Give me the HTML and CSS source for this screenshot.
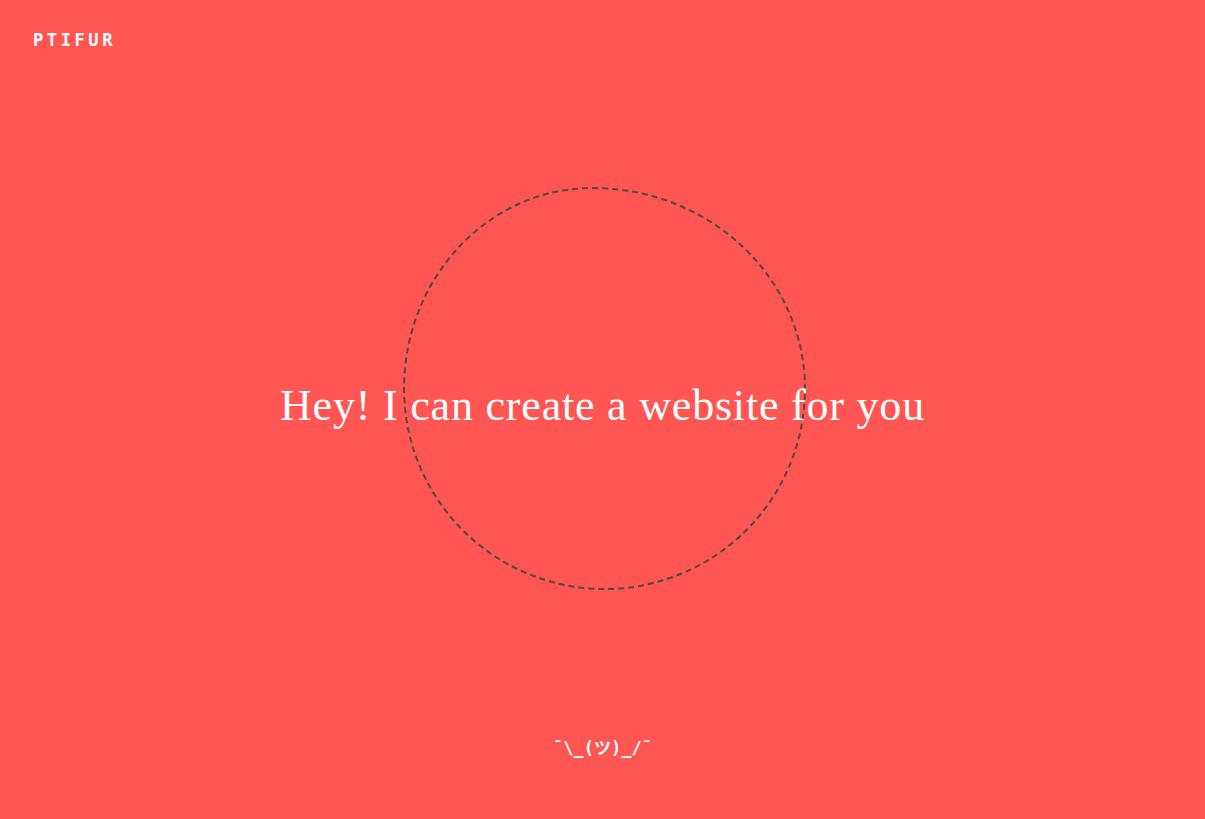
FILE: index.html
```html
<!DOCTYPE html>
<html>
<head>
<meta charset="utf-8">
<link rel="stylesheet" href="styles.css">
</head>
<body>
<div class="page">
  <header class="top">
    <div class="logo">PTIFUR</div>
  </header>
  <main class="hero">
    <div class="blob"></div>
    <h1 class="title">Hey! I can create a website for you</h1>
  </main>
  <footer class="bottom">
    <div class="shrug">¯\_(ツ)_/¯</div>
  </footer>
</div>
</body>
</html>
```
FILE: styles.css
```css
html, body {
  margin: 0;
  padding: 0;
  height: 100%;
}
body {
  background: #ff5553;
  color: #ffffff;
}
.page {
  height: 819px;
  display: flex;
  flex-direction: column;
}
.top {
  padding: 31px 33px 0;
  height: 40px;
}
.logo {
  font-family: "DejaVu Sans Mono", monospace;
  font-weight: bold;
  font-size: 17px;
  letter-spacing: 3.6px;
  line-height: 18px;
}
.hero {
  position: relative;
  flex: 1;
  display: flex;
  align-items: center;
  justify-content: center;
}
.blob {
  position: absolute;
  left: 403px;
  top: 116px;
  width: 399px;
  height: 399px;
  border: 2px dashed #4d4a4a;
  border-radius: 47% 53% 50% 50% / 50% 50% 50% 50%;
}
.title {
  position: relative;
  margin: 32px 0 0;
  font-family: "Liberation Serif", serif;
  font-weight: normal;
  font-size: 44px;
  letter-spacing: 0.8px;
  line-height: 50px;
}
.bottom {
  height: 110px;
  display: flex;
  justify-content: center;
}
.shrug {
  font-family: "DejaVu Sans Mono", "Noto Sans CJK JP", monospace;
  font-size: 17px;
  font-weight: bold;
  margin-top: 25px;
}
```
